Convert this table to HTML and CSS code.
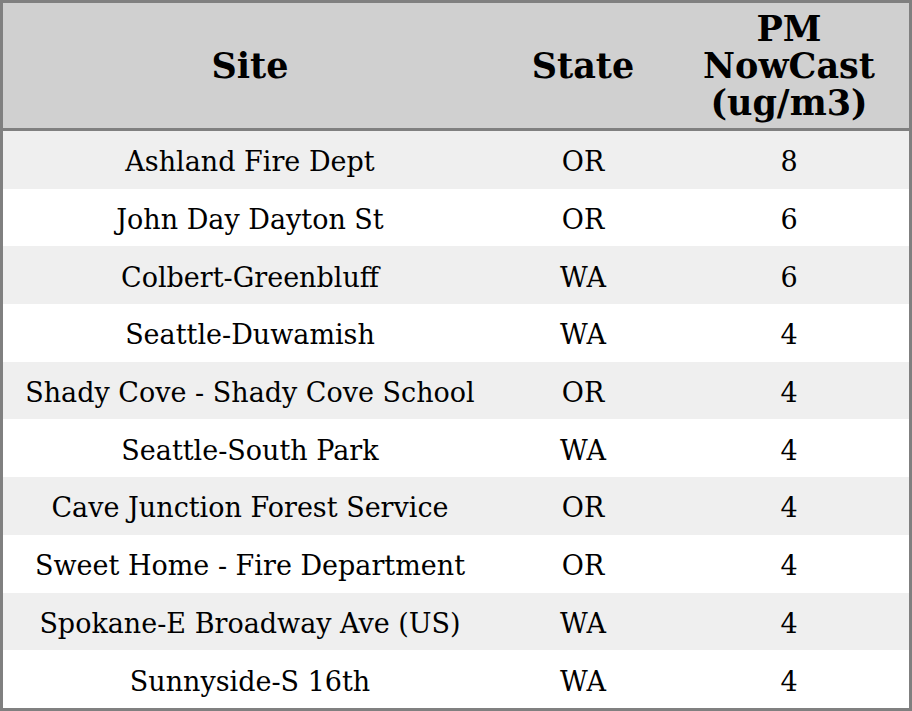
FILE: index.html
```html
<!DOCTYPE html>
<html>
<head>
<meta charset="utf-8">
<link rel="stylesheet" href="styles.css">
</head>
<body>
<table class="grid">
  <colgroup>
    <col class="c-site">
    <col class="c-state">
    <col class="c-pm">
  </colgroup>
  <thead>
    <tr class="head">
      <th>Site</th>
      <th>State</th>
      <th>PM<br>NowCast<br>(ug/m3)</th>
    </tr>
  </thead>
  <tbody>
    <tr><td>Ashland Fire Dept</td><td>OR</td><td>8</td></tr>
    <tr><td>John Day Dayton St</td><td>OR</td><td>6</td></tr>
    <tr><td>Colbert-Greenbluff</td><td>WA</td><td>6</td></tr>
    <tr><td>Seattle-Duwamish</td><td>WA</td><td>4</td></tr>
    <tr><td>Shady Cove - Shady Cove School</td><td>OR</td><td>4</td></tr>
    <tr><td>Seattle-South Park</td><td>WA</td><td>4</td></tr>
    <tr><td>Cave Junction Forest Service</td><td>OR</td><td>4</td></tr>
    <tr><td>Sweet Home - Fire Department</td><td>OR</td><td>4</td></tr>
    <tr><td>Spokane-E Broadway Ave (US)</td><td>WA</td><td>4</td></tr>
    <tr><td>Sunnyside-S 16th</td><td>WA</td><td>4</td></tr>
  </tbody>
</table>
</body>
</html>
```
FILE: styles.css
```css
html, body {
  margin: 0;
  padding: 0;
  background: #ffffff;
}
.grid {
  width: 912px;
  height: 711px;
  border-collapse: separate;
  border-spacing: 0;
  border: 3px solid #808080;
  table-layout: fixed;
  font-family: "DejaVu Serif", serif;
  color: #000;
}
.c-site { width: 494px; }
.c-state { width: 172px; }
.c-pm { width: 240px; }
.head th {
  background: #d0d0d0;
  font-size: 35px;
  font-weight: bold;
  height: 125px;
  padding: 0;
  border-bottom: 3px solid #808080;
  text-align: center;
  vertical-align: middle;
  line-height: 37px;
}
tbody td {
  font-size: 27px;
  height: 57.7px;
  padding: 4px 0 0 0;
  box-sizing: border-box;
  text-align: center;
  vertical-align: middle;
}
tbody tr:nth-child(odd) td {
  background: #efefef;
}
```
